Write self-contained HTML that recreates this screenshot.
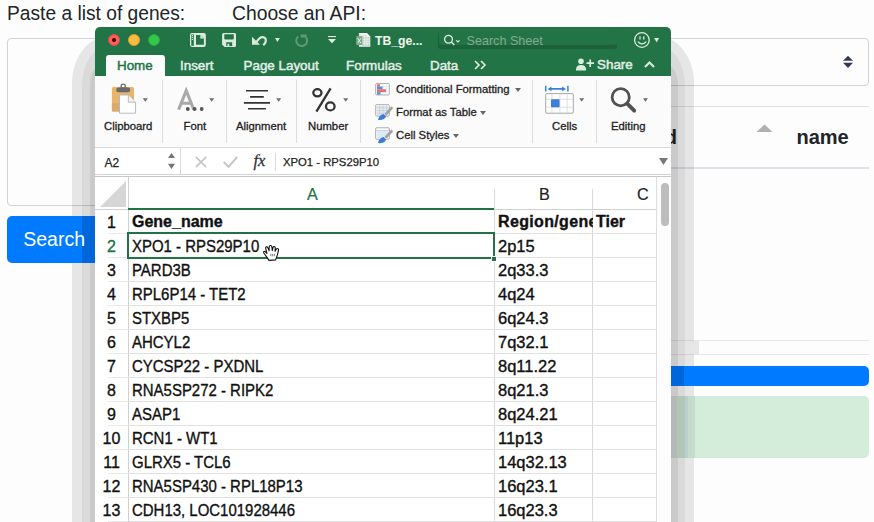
<!DOCTYPE html>
<html><head><meta charset="utf-8">
<style>
*{box-sizing:border-box;margin:0;padding:0}
html,body{width:874px;height:522px;overflow:hidden;background:#fdfdfd;font-family:"Liberation Sans",sans-serif;color:#212529}
.a{position:absolute}
.t{position:absolute;white-space:nowrap;line-height:1}
.tab{top:31.6px;-webkit-text-stroke:0.45px currentColor;font-size:13.4px;color:#e4efe7}
.sep{position:absolute;top:53px;width:1px;height:63px;background:#dcdcdc}
.lbl{font-size:11.3px;color:#222;-webkit-text-stroke:0.3px #222}
.hd{top:158.6px;font-size:16.2px;color:#222;-webkit-text-stroke:0.2px currentColor}
.rn{position:absolute;left:0;width:33px;text-align:center;font-size:16px;line-height:24px;padding-top:1.5px;-webkit-text-stroke:0.35px currentColor;white-space:nowrap}
.c{position:absolute;font-size:16px;line-height:24px;padding-top:2px;transform:scaleX(0.935);transform-origin:0 0;white-space:nowrap;color:#111;-webkit-text-stroke:0.35px #111}
.b{font-weight:bold;font-size:16px;padding-top:1px;transform:none}
</style></head><body>
<!-- page -->
<div class="t" style="left:7px;top:4px;font-size:19.7px;transform:scaleX(0.975);transform-origin:0 0">Paste a list of genes:</div>
<div class="t" style="left:232px;top:4px;font-size:19.7px;transform:scaleX(0.98);transform-origin:0 0">Choose an API:</div>
<div class="a" style="left:7px;top:38px;width:200px;height:168px;border:1px solid #ced4da;border-radius:4px;background:#fdfdfd"></div>
<div class="a" style="left:400px;top:38px;width:469px;height:48px;border:1px solid #ced4da;border-radius:4px;background:#fdfdfd"></div>
<svg class="a" style="left:841px;top:55px" width="14" height="15" viewBox="0 0 14 15"><path d="M2 5.8 L7 0.7 L12 5.8Z M2 7.8 L7 12.9 L12 7.8Z" fill="#343a52"/></svg>
<div class="a" style="left:7px;top:216px;width:150px;height:47px;background:#007bff;border-radius:5px"></div>
<div class="a" style="left:400px;top:106px;width:469px;height:1px;background:#dee2e6"></div>
<div class="a" style="left:400px;top:167px;width:469px;height:2px;background:#dee2e6"></div>
<div class="t" style="right:197px;top:127px;font-size:20px;font-weight:bold;">Searched</div>
<svg class="a" style="left:756px;top:123.5px" width="17" height="9"><path d="M0.5 8 L8.5 0.5 L16.5 8Z" fill="#b0b0b0"/></svg>
<div class="t" style="left:796.5px;top:127px;font-size:20px;font-weight:bold;">name</div>
<div class="a" style="left:400px;top:340px;width:469px;height:1px;background:#e6e6e6"></div>
<div class="a" style="left:400px;top:354px;width:469px;height:1px;background:#e6e6e6"></div>
<div class="a" style="left:694px;top:341px;width:5px;height:13px;background:#e7e7e7"></div>
<div class="a" style="left:400px;top:366px;width:469px;height:20px;background:#007bff;border-radius:5px"></div>
<div class="a" style="left:400px;top:396px;width:469px;height:62px;background:#d4edda;border-radius:5px"></div>

<!-- shadow -->
<div class="a" style="left:72px;top:35px;width:622px;height:600px;border-radius:40px/47px;background:rgba(0,0,0,0.09)"></div>
<div class="a" style="left:82px;top:44px;width:603px;height:600px;border-radius:30px/41px;background:rgba(0,0,0,0.05)"></div>
<div class="a" style="left:89.5px;top:64px;width:588px;height:600px;border-radius:12px/22px;background:rgba(0,0,0,0.07)"></div>

<div class="a" style="left:72px;top:216px;width:10px;height:47px;background:#007bff"></div>
<div class="a" style="left:82px;top:216px;width:13px;height:47px;background:#0067da"></div>
<div class="a" style="left:671px;top:366px;width:13px;height:20px;background:#0067da"></div>
<div class="a" style="left:684px;top:366px;width:10px;height:20px;background:#007bff"></div>
<div class="a" style="left:671px;top:396px;width:6px;height:61.5px;background:#b5b9b6"></div>
<div class="a" style="left:677px;top:396px;width:8px;height:61.5px;background:#b3c6b6"></div>
<div class="a" style="left:685px;top:396px;width:3px;height:61.5px;background:#b9cfcc"></div>
<div class="a" style="left:688px;top:396px;width:7px;height:61.5px;background:#c6dcca"></div>
<div class="t" style="left:23.2px;top:230px;font-size:19.5px;color:#fff">Search</div>
<!-- excel window -->
<div class="a" id="win" style="left:95px;top:27px;width:576px;height:520px;border-radius:5px 5px 0 0;overflow:hidden;background:#fff">
  <!-- title bar + tabs -->
  <div class="a" style="left:0;top:0;width:576px;height:49.4px;background:#227447"></div>
  <div class="a" style="left:13px;top:7px;width:12px;height:12px;border-radius:50%;background:#fc605c;border:0.5px solid #de4a45"></div>
  <div class="a" style="left:17.2px;top:11.2px;width:3.6px;height:3.6px;border-radius:50%;background:#4d0000"></div>
  <div class="a" style="left:33px;top:7px;width:12px;height:12px;border-radius:50%;background:#fdbc40;border:0.5px solid #dea236"></div>
  <div class="a" style="left:53px;top:7px;width:12px;height:12px;border-radius:50%;background:#34c84a;border:0.5px solid #27aa35"></div>
  <!-- sidebar icon + save -->
  <svg class="a" style="left:0;top:0" width="576" height="27" viewBox="0 0 576 27">
  <rect x="95" y="6.1" width="15.8" height="13.8" rx="1.8" fill="#dcecdf"/><rect x="96.3" y="7.3" width="2.5" height="11.5" fill="#227447"/>
  <circle cx="97.5" cy="8.4" r="0.65" fill="#dcecdf"/><circle cx="97.5" cy="10.4" r="0.65" fill="#dcecdf"/><circle cx="97.5" cy="12.4" r="0.65" fill="#dcecdf"/>
  <path d="M101 7.9 H105.3 L108.9 11.5 V17.8 H101Z" fill="#227447"/><path d="M105.3 7.9 V11.5 H108.9Z" fill="#dcecdf" stroke="#9fb3c9" stroke-width="0.3"/>
  <path d="M128.6 6.1 H139.5 Q141 6.1 141 7.6 V18.4 Q141 19.9 139.5 19.9 H129.6 L127.1 17.4 V7.6 Q127.1 6.1 128.6 6.1Z" fill="#dcecdf"/>
  <path d="M129.3 7.3 H138.8 V11.2 Q138.8 12.4 137.6 12.4 H130.5 Q129.3 12.4 129.3 11.2Z" fill="#227447"/>
  <rect x="131.2" y="15.2" width="6" height="3.9" fill="#227447"/><rect x="132.4" y="16.8" width="1.8" height="2.3" fill="#dcecdf"/>
  </svg>
  <!-- undo -->
  <svg class="a" style="left:0;top:0" width="576" height="27" viewBox="0 0 576 27"><path d="M157 9.8 V17.8 H165Z" fill="#d9eadc"/><path d="M161.5 14.8 C164 11.2 166 9.9 167.8 10.1 C171.3 10.5 172.3 14.6 168.3 18.2" fill="none" stroke="#d9eadc" stroke-width="2.1"/><path d="M180 11 H184.8 L182.4 15Z" fill="#d9eadc"/>
  <path d="M203.2 9.6 A5.4 5.4 0 1 0 210.8 10.2" fill="none" stroke="#5f9a74" stroke-width="2"/><path d="M205.6 7.4 H211.6 V10.6 H205.6Z" fill="#5f9a74"/></svg>
  <!-- customize -->
  <svg class="a" style="left:233px;top:8.9px" width="8" height="8"><rect x="0" y="0" width="8" height="1.1" fill="#dcecdf"/><path d="M0 3 H8 L4 7.2Z" fill="#dcecdf"/></svg>
  <!-- file icon -->
  <svg class="a" style="left:261px;top:6px" width="15" height="14" viewBox="0 0 15 14"><path d="M3 0.1 H11 L14.3 3.4 V13.8 H3Z" fill="#f3f7f4"/><rect x="6.2" y="4" width="7.3" height="9" fill="#bcd7c4"/><path d="M6.2 6.2 H13.5 M6.2 8.4 H13.5 M6.2 10.6 H13.5 M8.7 4 V13 M11.1 4 V13" stroke="#f3f7f4" stroke-width="0.7"/><path d="M3 0.1 V3 H11" fill="none" stroke="#a9b5ad" stroke-width="0.5"/><rect x="0.2" y="3.2" width="6.2" height="8.9" fill="#7ea88c"/><path d="M1.6 5.2 L5 10.2 M5 5.2 L1.6 10.2" stroke="#e6f0e9" stroke-width="1"/></svg>
  <div class="t" style="left:280px;top:8px;font-size:12.2px;font-weight:bold;color:#f1f6f2">TB_ge...</div>
  <!-- search sheet -->
  <div class="a" style="left:343px;top:5px;width:179px;height:16.5px;border-radius:3px;background:#1d613b;"></div>
  <div class="a" style="left:344px;top:3px;width:178px;height:15.2px;border-radius:3px;background:#227447;"></div>
  <svg class="a" style="left:349px;top:6px" width="18" height="13" viewBox="0 0 18 13"><circle cx="4.5" cy="6.3" r="3.9" fill="none" stroke="#dcebe0" stroke-width="1.3"/><path d="M7.3 9.1 L10.3 12.1" stroke="#dcebe0" stroke-width="1.4"/><path d="M12.2 7.3 L13.9 9 L15.6 7.3" fill="none" stroke="#dcebe0" stroke-width="1.1"/></svg>
  <div class="t" style="left:371.5px;top:8px;font-size:12.6px;color:#85a98f">Search Sheet</div>
  <!-- smiley -->
  <svg class="a" style="left:538px;top:4px" width="18" height="18" viewBox="0 0 18 18"><circle cx="8.9" cy="9" r="7.3" fill="none" stroke="#dcecdf" stroke-width="1.3"/><ellipse cx="7" cy="6.9" rx="0.7" ry="1.9" fill="#dcecdf"/><ellipse cx="10.8" cy="6.9" rx="0.7" ry="1.9" fill="#dcecdf"/><path d="M4.9 10.6 Q8.9 15.3 13.3 10.6" fill="none" stroke="#dcecdf" stroke-width="1.3"/></svg>
  <svg class="a" style="left:559px;top:11px" width="6" height="5"><path d="M0 0 H5.2 L2.6 4.2Z" fill="#dcecdf"/></svg>
  <!-- tabs -->
  <div class="a" style="left:11px;top:28px;width:59px;height:21px;border-radius:3px 3px 0 0;background:#fbfbfb"></div>
  <div class="t tab" style="left:22px;color:#217346">Home</div>
  <div class="t tab" style="left:85px">Insert</div>
  <div class="t tab" style="left:148.5px">Page Layout</div>
  <div class="t tab" style="left:251px">Formulas</div>
  <div class="t tab" style="left:335px">Data</div>
  <svg class="a" style="left:379px;top:33px" width="13" height="10" viewBox="0 0 13 10"><path d="M1 1 L5 5 L1 9 M7 1 L11 5 L7 9" fill="none" stroke="#e4efe7" stroke-width="1.6"/></svg>
  <svg class="a" style="left:480px;top:31px" width="19" height="15" viewBox="0 0 19 15"><circle cx="6" cy="3.3" r="2.8" fill="#dcecdf"/><path d="M0.9 12.4 Q0.9 7 6 7 Q11.2 7 11.2 12.4Z" fill="#dcecdf"/><path d="M15.2 1.5 V9 M11.5 5.2 H19" stroke="#dcecdf" stroke-width="1.7"/></svg>
  <div class="t tab" style="left:502px;top:31px">Share</div>
  <svg class="a" style="left:549px;top:34px" width="11" height="7" viewBox="0 0 11 7"><path d="M1 6 L5.5 1.5 L10 6" fill="none" stroke="#dcecdf" stroke-width="2"/></svg>

  <!-- ribbon -->
  <div class="a" style="left:0;top:49px;width:576px;height:72px;background:#fbfbfb"></div>
  <div class="a" style="left:0;top:120px;width:576px;height:1px;background:#d9d9d9"></div>
  <div class="sep" style="left:67px"></div>
  <div class="sep" style="left:131px"></div>
  <div class="sep" style="left:201px"></div>
  <div class="sep" style="left:265px"></div>
  <div class="sep" style="left:437px"></div>
  <div class="sep" style="left:501px"></div>
  <div class="t lbl" style="left:9px;top:94px">Clipboard</div>
  <div class="t lbl" style="left:88.5px;top:94px">Font</div>
  <div class="t lbl" style="left:141px;top:94px">Alignment</div>
  <div class="t lbl" style="left:213px;top:94px">Number</div>
  <div class="t lbl" style="left:457px;top:94px">Cells</div>
  <div class="t lbl" style="left:516px;top:94px">Editing</div>
  <div class="t lbl" style="left:301px;top:57px">Conditional Formatting</div>
  <div class="t lbl" style="left:301px;top:80px">Format as Table</div>
  <div class="t lbl" style="left:301px;top:103px">Cell Styles</div>
    <svg class="a" style="left:419.5px;top:61px" width="6" height="4"><path d="M0 0 L6 0 L3 4Z" fill="#666"/></svg>
  <svg class="a" style="left:384.5px;top:84px" width="6" height="4"><path d="M0 0 L6 0 L3 4Z" fill="#666"/></svg>
  <svg class="a" style="left:357.5px;top:107px" width="6" height="4"><path d="M0 0 L6 0 L3 4Z" fill="#666"/></svg>
  <svg class="a" style="left:0;top:0" width="576" height="121" viewBox="0 0 576 121">
  <rect x="16.9" y="59.9" width="22.1" height="24.6" rx="1.5" fill="#e7b56b"/><rect x="16.9" y="76.3" width="22.1" height="8.2" fill="#d8aa70"/>
  <rect x="21.3" y="60.4" width="13.9" height="4.8" rx="2" fill="#6a6a6a"/><circle cx="28.2" cy="59.2" r="2.1" fill="none" stroke="#6a6a6a" stroke-width="1.3"/>
  <path d="M24.5 68 H33.3 L40.6 75.2 V86.2 H24.5Z" fill="#fff" stroke="#b3b3b3" stroke-width="0.9"/><path d="M33.3 68 V75.2 H40.6" fill="#f2f2f2" stroke="#b3b3b3" stroke-width="0.9"/>
  <path d="M47.8 71.2 h5 l-2.5 3.5Z" fill="#6e6e6e"/><path d="M114.2 71.2 h5 l-2.5 3.5Z" fill="#6e6e6e"/><path d="M181.2 71.2 h5 l-2.5 3.5Z" fill="#6e6e6e"/><path d="M248.2 71.2 h5 l-2.5 3.5Z" fill="#6e6e6e"/><path d="M484.2 71.2 h5 l-2.5 3.5Z" fill="#6e6e6e"/><path d="M548 71.2 h5 l-2.5 3.5Z" fill="#6e6e6e"/>
  <path d="M83.6 82.6 L91.2 63.6 L98.8 82.6 M86.3 76.2 H96.1" fill="none" stroke="#a9a9a9" stroke-width="3"/>
  <circle cx="92.8" cy="82" r="1.9" fill="#555"/><circle cx="99.6" cy="82" r="1.9" fill="#555"/><circle cx="106.7" cy="82" r="1.9" fill="#555"/>
  <path d="M151 63.7 H173 M155.1 69.9 H168.8 M148.9 75.9 H175 M153 81.8 H170.9" stroke="#333" stroke-width="1.6"/>
  <ellipse cx="222.4" cy="65.8" rx="4.1" ry="3.6" fill="none" stroke="#333" stroke-width="2.3"/><path d="M235.6 61.3 L221.4 84.6" stroke="#333" stroke-width="2.3"/><ellipse cx="235.3" cy="79.4" rx="4.3" ry="4" fill="none" stroke="#333" stroke-width="2.3"/>
  <rect x="280.7" y="56.5" width="13.6" height="11.4" rx="1" fill="#fff" stroke="#a0a0a0" stroke-width="0.9"/><path d="M280.7 59.5 H294.3 M280.7 62.3 H294.3 M280.7 65.1 H294.3 M284.5 56.5 V68 M288.2 56.5 V68 M291.5 56.5 V68" stroke="#dedede" stroke-width="0.6"/>
  <rect x="282" y="57.3" width="3" height="2.3" fill="#e76e6e"/><rect x="282" y="59.6" width="5.6" height="2.7" fill="#5b8fdb"/><rect x="282" y="62.3" width="9" height="2.8" fill="#e76e6e"/><rect x="282" y="65.1" width="3.6" height="2.5" fill="#5b8fdb"/>
  <rect x="280.7" y="77.7" width="13.6" height="11.4" rx="1" fill="#fff" stroke="#a0a0a0" stroke-width="0.9"/><rect x="282" y="79" width="11" height="9" fill="#dce9f7"/><path d="M280.7 80.7 H294.3 M280.7 83.5 H294.3 M280.7 86.3 H294.3 M284.5 77.7 V89 M288.2 77.7 V89 M291.5 77.7 V89" stroke="#c9c9c9" stroke-width="0.6"/>
  <path d="M291.3 86.7 L296.5 81.1" stroke="#a3a3a3" stroke-width="2.8" stroke-linecap="round"/><path d="M283 93 C283.4 90 285.3 87.7 288.5 86.9 L291.1 89.3 C290.5 91.9 287.3 93.4 283 93Z" fill="#3b7ddd"/>
  <rect x="280.7" y="100.8" width="13.6" height="11.4" rx="1" fill="#fff" stroke="#a0a0a0" stroke-width="0.9"/><rect x="282" y="103.5" width="11" height="7.5" fill="#dce9f7"/><path d="M280.7 103.5 H294.3" stroke="#b9b9b9" stroke-width="0.6"/>
  <path d="M291.3 109.8 L296.5 104.2" stroke="#a3a3a3" stroke-width="2.8" stroke-linecap="round"/><path d="M283 116.1 C283.4 113.1 285.3 110.8 288.5 110 L291.1 112.4 C290.5 115 287.3 116.5 283 116.1Z" fill="#3b7ddd"/>
  <path d="M450.7 58.7 V64.4 M472.9 58.7 V64.4" stroke="#3c7fd6" stroke-width="1.5"/><path d="M455.5 61.9 H468.5" stroke="#3c7fd6" stroke-width="1.9"/><path d="M452.6 61.9 L456.4 59.6 V64.2Z M471 61.9 L467.2 59.6 V64.2Z" fill="#3c7fd6"/>
  <rect x="450.7" y="66.6" width="27.6" height="19.6" rx="1.2" fill="#fff" stroke="#9d9d9d" stroke-width="0.9"/><path d="M450.7 72.3 H478.3 M450.7 80.2 H478.3 M456.9 66.6 V86.2 M465 66.6 V86.2 M472.2 66.6 V86.2" stroke="#d2d2d2" stroke-width="0.7"/>
  <rect x="456" y="72.3" width="8.6" height="7.9" rx="0.8" fill="#3c7fd6"/>
  <circle cx="525.7" cy="70.2" r="8.6" fill="none" stroke="#515151" stroke-width="2.8"/><path d="M532.2 76.7 L539.2 83.7" stroke="#515151" stroke-width="3.8" stroke-linecap="round"/>
  </svg>
  <!-- formula bar -->
  <div class="a" style="left:0;top:121px;width:576px;height:27px;background:#fff"></div>
  <div class="a" style="left:0;top:147px;width:576px;height:1px;background:#d2d2d2"></div><div class="a" style="left:0;top:149px;width:576px;height:1px;background:#c8c8c8"></div>
  <div class="t" style="left:9.5px;top:130px;font-size:12px;color:#222;-webkit-text-stroke:0.25px #222">A2</div>
  <svg class="a" style="left:73px;top:126px" width="8" height="17"><path d="M0 5 L3.5 0 L7 5Z M0 10.8 L3.5 16 L7 10.8Z" fill="#757575"/></svg>
  <div class="a" style="left:85px;top:121px;width:1px;height:27px;background:#d9d9d9"></div>
  <svg class="a" style="left:100px;top:129px" width="12" height="12"><path d="M0.8 0.8 L11.2 11.2 M11.2 0.8 L0.8 11.2" stroke="#c4c4c4" stroke-width="1.7"/></svg>
  <svg class="a" style="left:128px;top:129px" width="15" height="12"><path d="M0.8 6 L5.5 10.8 L14.2 1" fill="none" stroke="#c4c4c4" stroke-width="1.9"/></svg>
  <div class="t" style="left:158.5px;top:126px;font-family:'Liberation Serif',serif;font-style:italic;font-size:16.5px;color:#333;-webkit-text-stroke:0.3px #333">fx</div>
  <div class="a" style="left:180px;top:126px;width:1px;height:18px;background:#d9d9d9"></div>
  <div class="t" style="left:188px;top:130px;font-size:11.3px;color:#222;-webkit-text-stroke:0.25px #222">XPO1 - RPS29P10</div>
  <svg class="a" style="left:564px;top:131px" width="9" height="7"><path d="M0 0 L9 0 L4.5 7Z" fill="#777"/></svg>

  <!-- column header -->
  <div class="a" style="left:0;top:150px;width:576px;height:32px;background:#fff"></div>
  <svg class="a" style="left:5px;top:154px" width="27" height="27"><path d="M26 0 L26 26 L0 26Z" fill="#d6d6d6"/></svg>
  <div class="a" style="left:33px;top:150px;width:1px;height:372px;background:#d0d0d0"></div>
  <div class="a" style="left:0;top:182px;width:33px;height:1px;background:#d0d0d0"></div>
  <div class="a" style="left:33px;top:181px;width:366px;height:2px;background:#217346"></div>
  <div class="a" style="left:399px;top:182px;width:164px;height:1px;background:#d0d0d0"></div>
  <div class="a" style="left:399px;top:162px;width:1px;height:360px;background:#d8d8d8"></div>
  <div class="a" style="left:497px;top:162px;width:1px;height:360px;background:#d8d8d8"></div>
  <div class="t hd" style="left:212px;color:#217346">A</div>
  <div class="t hd" style="left:444px">B</div>
  <div class="t hd" style="left:542px">C</div>
<div class="a" style="left:13px;top:206px;width:20px;height:1px;background:#e9e9e9"></div>
<div class="a" style="left:33px;top:206px;width:530px;height:1px;background:#e1e1e1"></div>
<div class="rn" style="top:182px;color:#111">1</div>
<div class="c b" style="left:37px;top:182px">Gene_name</div>
<div class="c b" style="left:403px;top:182px;width:95px;overflow:hidden;letter-spacing:0.35px">Region/gene</div>
<div class="c b" style="left:501px;top:182px">Tier</div>
<div class="a" style="left:13px;top:230px;width:20px;height:1px;background:#e9e9e9"></div>
<div class="a" style="left:33px;top:230px;width:530px;height:1px;background:#e1e1e1"></div>
<div class="rn" style="top:206px;color:#217346">2</div>
<div class="c" style="left:37px;top:206px">XPO1 - RPS29P10</div>
<div class="c" style="left:403px;top:206px;width:95px;transform:scaleX(1.03)">2p15</div>
<div class="a" style="left:13px;top:254px;width:20px;height:1px;background:#e9e9e9"></div>
<div class="a" style="left:33px;top:254px;width:530px;height:1px;background:#e1e1e1"></div>
<div class="rn" style="top:230px;color:#111">3</div>
<div class="c" style="left:37px;top:230px">PARD3B</div>
<div class="c" style="left:403px;top:230px;width:95px;transform:scaleX(1.03)">2q33.3</div>
<div class="a" style="left:13px;top:278px;width:20px;height:1px;background:#e9e9e9"></div>
<div class="a" style="left:33px;top:278px;width:530px;height:1px;background:#e1e1e1"></div>
<div class="rn" style="top:254px;color:#111">4</div>
<div class="c" style="left:37px;top:254px">RPL6P14 - TET2</div>
<div class="c" style="left:403px;top:254px;width:95px;transform:scaleX(1.03)">4q24</div>
<div class="a" style="left:13px;top:302px;width:20px;height:1px;background:#e9e9e9"></div>
<div class="a" style="left:33px;top:302px;width:530px;height:1px;background:#e1e1e1"></div>
<div class="rn" style="top:278px;color:#111">5</div>
<div class="c" style="left:37px;top:278px">STXBP5</div>
<div class="c" style="left:403px;top:278px;width:95px;transform:scaleX(1.03)">6q24.3</div>
<div class="a" style="left:13px;top:326px;width:20px;height:1px;background:#e9e9e9"></div>
<div class="a" style="left:33px;top:326px;width:530px;height:1px;background:#e1e1e1"></div>
<div class="rn" style="top:302px;color:#111">6</div>
<div class="c" style="left:37px;top:302px">AHCYL2</div>
<div class="c" style="left:403px;top:302px;width:95px;transform:scaleX(1.03)">7q32.1</div>
<div class="a" style="left:13px;top:350px;width:20px;height:1px;background:#e9e9e9"></div>
<div class="a" style="left:33px;top:350px;width:530px;height:1px;background:#e1e1e1"></div>
<div class="rn" style="top:326px;color:#111">7</div>
<div class="c" style="left:37px;top:326px">CYCSP22 - PXDNL</div>
<div class="c" style="left:403px;top:326px;width:95px;transform:scaleX(1.03)">8q11.22</div>
<div class="a" style="left:13px;top:374px;width:20px;height:1px;background:#e9e9e9"></div>
<div class="a" style="left:33px;top:374px;width:530px;height:1px;background:#e1e1e1"></div>
<div class="rn" style="top:350px;color:#111">8</div>
<div class="c" style="left:37px;top:350px">RNA5SP272 - RIPK2</div>
<div class="c" style="left:403px;top:350px;width:95px;transform:scaleX(1.03)">8q21.3</div>
<div class="a" style="left:13px;top:398px;width:20px;height:1px;background:#e9e9e9"></div>
<div class="a" style="left:33px;top:398px;width:530px;height:1px;background:#e1e1e1"></div>
<div class="rn" style="top:374px;color:#111">9</div>
<div class="c" style="left:37px;top:374px">ASAP1</div>
<div class="c" style="left:403px;top:374px;width:95px;transform:scaleX(1.03)">8q24.21</div>
<div class="a" style="left:13px;top:422px;width:20px;height:1px;background:#e9e9e9"></div>
<div class="a" style="left:33px;top:422px;width:530px;height:1px;background:#e1e1e1"></div>
<div class="rn" style="top:398px;color:#111">10</div>
<div class="c" style="left:37px;top:398px">RCN1 - WT1</div>
<div class="c" style="left:403px;top:398px;width:95px;transform:scaleX(1.03)">11p13</div>
<div class="a" style="left:13px;top:446px;width:20px;height:1px;background:#e9e9e9"></div>
<div class="a" style="left:33px;top:446px;width:530px;height:1px;background:#e1e1e1"></div>
<div class="rn" style="top:422px;color:#111">11</div>
<div class="c" style="left:37px;top:422px">GLRX5 - TCL6</div>
<div class="c" style="left:403px;top:422px;width:95px;transform:scaleX(1.03)">14q32.13</div>
<div class="a" style="left:13px;top:470px;width:20px;height:1px;background:#e9e9e9"></div>
<div class="a" style="left:33px;top:470px;width:530px;height:1px;background:#e1e1e1"></div>
<div class="rn" style="top:446px;color:#111">12</div>
<div class="c" style="left:37px;top:446px">RNA5SP430 - RPL18P13</div>
<div class="c" style="left:403px;top:446px;width:95px;transform:scaleX(1.03)">16q23.1</div>
<div class="a" style="left:13px;top:494px;width:20px;height:1px;background:#e9e9e9"></div>
<div class="a" style="left:33px;top:494px;width:530px;height:1px;background:#e1e1e1"></div>
<div class="rn" style="top:470px;color:#111">13</div>
<div class="c" style="left:37px;top:470px">CDH13, LOC101928446</div>
<div class="c" style="left:403px;top:470px;width:95px;transform:scaleX(1.03)">16q23.3</div>
  <!-- selection -->
  <div class="a" style="left:32px;top:205px;width:368px;height:27px;border:2px solid #217346"></div>
  <div class="a" style="left:396px;top:229px;width:6px;height:6px;background:#217346;border:1px solid #fff"></div>
  <!-- hand cursor -->
  <svg class="a" style="left:167.5px;top:217.5px" width="17" height="17" viewBox="0 0 17 17"><path d="M6 15.4 C4.5 13 2.5 10.5 0.7 7.7 C0.3 6.6 1.3 6 2.2 6.6 L3.9 8.3 L2.7 3.3 C2.4 1.9 4.1 1.1 4.7 2.4 L6.1 5.8 L6.2 1.7 C6.3 0.2 8.7 0.2 8.8 1.6 L9.3 5.6 L10.1 2.3 C10.4 1.1 12.2 1.3 12.2 2.7 L12.1 6.2 L13.4 4 C14 3.1 15.9 3.7 15.5 5.1 C15 8 14 11.5 12.6 14.9 Z" fill="#fff" stroke="#111" stroke-width="1.1" stroke-linejoin="round"/><path d="M7.9 8.8 V11.2 M9.7 8.8 V11.2 M11.4 8.8 V11.2" stroke="#444" stroke-width="0.7"/></svg>
  <!-- scrollbar -->
  <div class="a" style="left:561px;top:150px;width:15px;height:372px;background:#fdfdfd;border-left:1px solid #dddddd"></div>
  <div class="a" style="left:565.5px;top:156px;width:8.5px;height:43px;border-radius:4.5px;background:#bdbdbd"></div>
</div>
</body></html>
